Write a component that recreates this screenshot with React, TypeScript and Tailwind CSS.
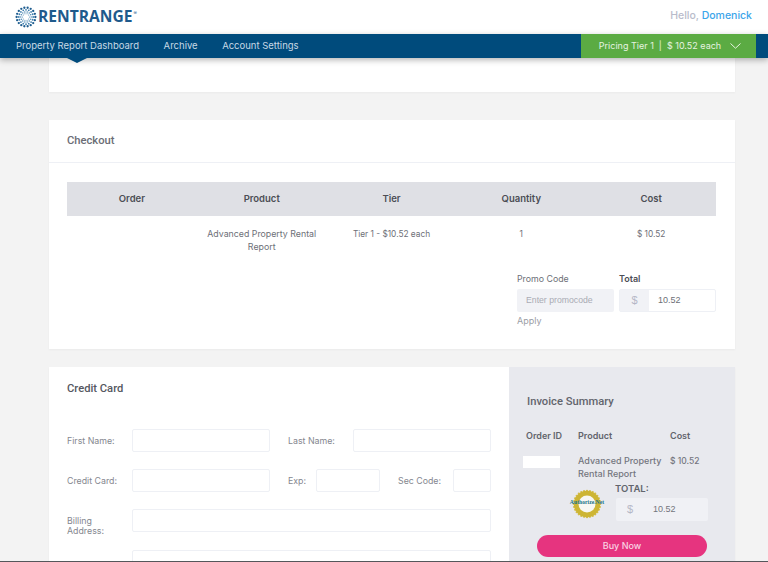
import React from "react";

function Logo() {
  const rings = [
    { r: 9.4, n: 18, s: 1.15 },
    { r: 7.2, n: 16, s: 0.9 },
    { r: 5.2, n: 14, s: 0.7 },
    { r: 3.4, n: 10, s: 0.55 },
  ];
  return (
    <svg width="22" height="22" viewBox="-11 -11 22 22" className="shrink-0">
      {rings.map((ring) =>
        Array.from({ length: ring.n }).map((_, i) => {
          const a = (i / ring.n) * Math.PI * 2;
          return (
            <circle
              key={`${ring.r}-${i}`}
              cx={Math.cos(a) * ring.r}
              cy={Math.sin(a) * ring.r}
              r={ring.s}
              fill={ring.r > 8 ? "#1d5c8f" : "#3f7fae"}
            />
          );
        })
      )}
    </svg>
  );
}

function Badge() {
  const n = 28;
  return (
    <div className="relative w-[44px] h-[30px] flex items-center justify-center">
      <svg width="30" height="30" viewBox="-15 -15 30 30">
        {Array.from({ length: n }).map((_, i) => {
          const a = (i / n) * Math.PI * 2;
          return <circle key={i} cx={Math.cos(a) * 13.2} cy={Math.sin(a) * 13.2} r="1.1" fill="#d4bd4a" />;
        })}
        <circle r="13.2" fill="#cdb534" />
        <circle r="8.5" fill="#f7f7f3" />
      </svg>
      <span className="absolute left-0 top-[10px] w-full text-center text-[5.7px] font-bold leading-[7px] text-[#1a7488] font-['Liberation_Serif',serif] whitespace-nowrap">
        Authorize.Net
      </span>
    </div>
  );
}

function Field({ className = "" }: { className?: string }) {
  return <div className={`border border-[#eef0f5] rounded-[2px] bg-white ${className}`} />;
}

function Label({ children, className = "" }: { children: React.ReactNode; className?: string }) {
  return <span className={`text-[8.8px] leading-[10px] text-[#85878f] ${className}`}>{children}</span>;
}

export default function App() {
  return (
    <div className="h-[562px] w-[768px] overflow-hidden bg-[#f3f3f3] font-['Inter',sans-serif] flex flex-col relative">
      <header className="h-[34px] shrink-0 bg-white flex items-center justify-between pl-[15px] pr-[16px]">
        <div className="flex items-center gap-[1px]">
          <Logo />
          <span className="text-[15.6px] font-bold leading-none text-[#1f5a8c] font-['Open_Sans',sans-serif]">RENTRANGE</span>
          <span className="text-[5px] leading-none text-[#1f5a8c] self-start mt-[5px]">®</span>
        </div>
        <div className="text-[10.5px] font-medium text-[#b9bccb] mb-[3px]">
          Hello, <span className="text-[#3ba5ea]">Domenick</span>
        </div>
      </header>

      <nav className="relative z-10 h-[24px] shrink-0 bg-[#004b7c] shadow-[0_2px_6px_rgba(0,0,0,0.3)] flex items-stretch pl-[16px] pr-[12px] text-[9.5px] text-[#c7d9e6]">
        <div className="flex items-center gap-[24.5px] flex-1 pt-[1px]">
          <span className="relative">
            Property Report Dashboard
            <span className="absolute left-[47px] top-[17px] w-0 h-0 border-l-[14px] border-r-[14px] border-t-[7px] border-l-transparent border-r-transparent border-t-[#004b7c]" />
          </span>
          <span>Archive</span>
          <span>Account Settings</span>
        </div>
        <div className="w-[175px] bg-[#5bab43] text-[#e6f3e0] flex items-center justify-center gap-[9px] pl-[3px] text-[9px]">
          <span className="whitespace-nowrap">Pricing Tier 1&nbsp;&nbsp;|&nbsp;&nbsp;$ 10.52 each</span>
          <svg width="11" height="6" viewBox="0 0 11 6" fill="none" stroke="#e6f3e0" strokeWidth="1">
            <path d="M0.5 0.5 L5.5 5.2 L10.5 0.5" />
          </svg>
        </div>
      </nav>

      <main className="flex-1 pl-[49px] pr-[33px] flex flex-col min-h-0">
        <section className="h-[34px] shrink-0 bg-white shadow-[0_1px_2px_rgba(0,0,0,0.04)]" />

        <section className="mt-[28px] h-[229px] shrink-0 bg-white shadow-[0_1px_2px_rgba(0,0,0,0.04)]">
          <div className="h-[43px] border-b border-[#eef0f5] flex items-center pl-[18px] font-['Roboto',sans-serif] text-[11.2px] font-medium text-[#6b6d75]">
            Checkout
          </div>
          <div className="pl-[18px] pt-[19px] pr-[19px]">
            <div className="h-[34px] bg-[#dfe0e5] grid grid-cols-5 items-center text-center text-[9.5px] font-semibold text-[#4c4e55]">
              <span>Order</span>
              <span>Product</span>
              <span>Tier</span>
              <span>Quantity</span>
              <span>Cost</span>
            </div>
            <div className="grid grid-cols-5 text-center text-[8.3px] leading-[13px] text-[#6d6f77] pt-[12px]">
              <span />
              <span className="px-[8px] text-[8.8px] -mx-[4px] -mt-[1px]">Advanced Property Rental Report</span>
              <span>Tier 1 - $10.52 each</span>
              <span>1</span>
              <span>$ 10.52</span>
            </div>
            <div className="flex justify-end gap-[5px] mt-[19px]">
              <div className="w-[97px] flex flex-col">
                <span className="text-[8.8px] leading-[14px] text-[#6d6f77]">Promo Code</span>
                <div className="mt-[3px] h-[23px] bg-[#f1f2f6] rounded-[2px] flex items-center pl-[9px] text-[8.7px] text-[#a9abb4] font-['Liberation_Sans',sans-serif]">
                  Enter promocode
                </div>
                <span className="mt-[2px] text-[9px] leading-[14px] text-[#9b9da5]">Apply</span>
              </div>
              <div className="w-[97px] flex flex-col">
                <span className="text-[9px] leading-[14px] font-semibold text-[#4c4e55]">Total</span>
                <div className="mt-[3px] h-[23px] border border-[#eef0f5] rounded-[2px] flex items-stretch">
                  <span className="w-[29px] bg-[#f1f2f6] flex items-center justify-center text-[11px] text-[#b5b7c6] font-['Liberation_Sans',sans-serif]">$</span>
                  <span className="flex-1 flex items-center pl-[9px] text-[9px] text-[#6d6f77] font-['Liberation_Sans',sans-serif]">10.52</span>
                </div>
              </div>
            </div>
          </div>
        </section>

        <section className="mt-[18px] flex-1 min-h-0 flex items-stretch bg-white shadow-[0_1px_2px_rgba(0,0,0,0.04)]">
          <div className="w-[460px] shrink-0 pl-[18px] pr-[18px] overflow-hidden">
            <h2 className="pt-[15px] font-['Roboto',sans-serif] text-[11.2px] leading-[14px] font-medium text-[#55575f]">Credit Card</h2>
            <div className="mt-[33px] flex flex-col gap-[17px]">
              <div className="flex items-center h-[23px]">
                <Label className="w-[65px] shrink-0">First Name:</Label>
                <Field className="w-[138px] h-full" />
                <Label className="w-[65px] shrink-0 ml-[18px]">Last Name:</Label>
                <Field className="w-[138px] h-full" />
              </div>
              <div className="flex items-center h-[23px]">
                <Label className="w-[65px] shrink-0">Credit Card:</Label>
                <Field className="w-[138px] h-full" />
                <Label className="w-[28px] shrink-0 ml-[18px]">Exp:</Label>
                <Field className="w-[64px] h-full" />
                <Label className="w-[55px] shrink-0 ml-[18px]">Sec Code:</Label>
                <Field className="w-[38px] h-full" />
              </div>
              <div className="flex items-center h-[23px]">
                <Label className="w-[65px] shrink-0 mt-[10px]">Billing<br />Address:</Label>
                <Field className="flex-1 h-full" />
              </div>
              <div className="flex items-center h-[23px] mt-[1px]">
                <span className="w-[65px] shrink-0" />
                <Field className="flex-1 h-full" />
              </div>
            </div>
          </div>
          <div className="flex-1 bg-[#e8e9ee] pl-[17px] pr-[27px] overflow-hidden">
            <h2 className="pt-[28px] pl-[1px] font-['Roboto',sans-serif] text-[11.2px] leading-[14px] font-medium text-[#62646c]">Invoice Summary</h2>
            <div className="mt-[21px] grid grid-cols-[52px_92px_1fr] text-[9px] leading-[12px] font-semibold text-[#62646c]">
              <span>Order ID</span>
              <span>Product</span>
              <span>Cost</span>
            </div>
            <div className="mt-[12px] grid grid-cols-[52px_92px_1fr] text-[9px] leading-[12.5px] font-medium text-[#74767e]">
              <span className="-ml-[3px] mt-[2px] w-[37px] h-[12px] bg-white" />
              <span className="pt-[1px] whitespace-nowrap">Advanced Property<br />Rental Report</span>
              <span className="pt-[1px] text-[8.5px]">$ 10.52</span>
            </div>
            <div className="flex mt-[2px]">
              <div className="w-[44px] ml-[39px] mt-[7px] shrink-0">
                <Badge />
              </div>
              <div className="ml-[7px] w-[92px] shrink-0">
                <div className="text-[9.5px] leading-[12px] font-semibold text-[#62646c] -ml-[1px] mt-[1px]">TOTAL:</div>
                <div className="mt-[3px] h-[23px] bg-[#f0f1f5] rounded-[2px] flex items-center font-['Liberation_Sans',sans-serif]">
                  <span className="w-[28px] text-center text-[11px] text-[#b5b7c6]">$</span>
                  <span className="pl-[9px] text-[9px] text-[#74767e]">10.52</span>
                </div>
              </div>
            </div>
            <button className="mt-[14px] ml-[11px] w-[170px] h-[22px] rounded-full bg-[#e6347f] text-[9px] font-medium text-[#f9d3e3] flex items-center justify-center">
              Buy Now
            </button>
          </div>
        </section>
      </main>
      <div className="h-[1px] shrink-0 bg-[#55575b]" />
    </div>
  );
}
